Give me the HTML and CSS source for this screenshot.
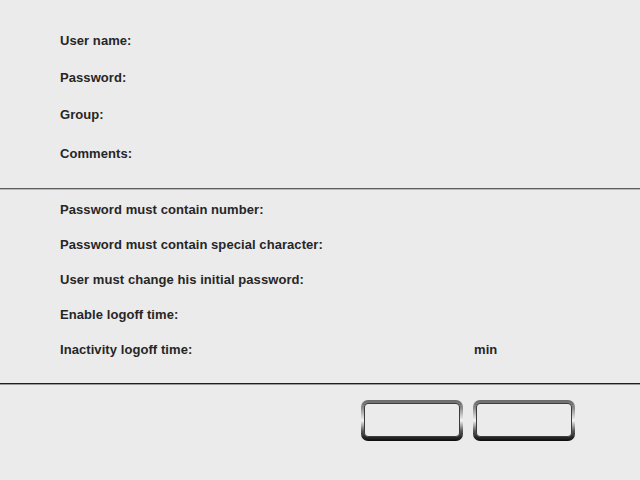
FILE: index.html
```html
<!DOCTYPE html>
<html>
<head>
<meta charset="utf-8">
<link rel="stylesheet" href="styles.css">
</head>
<body>
<div class="page">
  <section class="group group-top">
    <div class="row">User name:</div>
    <div class="row">Password:</div>
    <div class="row">Group:</div>
    <div class="row row-comments">Comments:</div>
  </section>
  <hr class="sep sep-light">
  <section class="group group-mid">
    <div class="row">Password must contain number:</div>
    <div class="row">Password must contain special character:</div>
    <div class="row">User must change his initial password:</div>
    <div class="row">Enable logoff time:</div>
    <div class="row row-split"><span class="lbl">Inactivity logoff time:</span><span class="unit">min</span></div>
  </section>
  <hr class="sep sep-dark">
  <div class="actions">
    <div class="btn"><div class="btn-face"></div></div>
    <div class="btn"><div class="btn-face"></div></div>
  </div>
</div>
</body>
</html>
```

FILE: styles.css
```css
html, body {
  margin: 0;
  padding: 0;
  background: #ebebeb;
}
.page {
  width: 640px;
  height: 480px;
  font-family: "Liberation Sans", Arial, sans-serif;
  font-weight: bold;
  font-size: 13px;
  letter-spacing: 0.07px;
  color: #262626;
  display: flex;
  flex-direction: column;
}
.group {
  display: flex;
  flex-direction: column;
  padding-left: 60px;
}
.group-top {
  padding-top: 22px;
  padding-bottom: 16px;
}
.group-top .row {
  height: 37px;
  line-height: 37px;
}
.group-top .row-comments {
  margin-top: 2px;
}
.group-mid {
  padding-top: 3px;
  padding-bottom: 16px;
}
.group-mid .row {
  height: 35px;
  line-height: 35px;
}
.row-split {
  display: flex;
}
.row-split .lbl {
  width: 414px;
}
.sep {
  margin: 0;
  border: 0;
  height: 1px;
}
.sep-light {
  background: #5e5e5e;
  box-shadow: 0 1px 0 #b9b9b9;
}
.sep-dark {
  background: #1e1e1e;
  box-shadow: 0 1px 0 #9a9a9a;
}
.actions {
  display: flex;
  gap: 10px;
  padding-left: 361px;
  margin-top: 16px;
}
.btn {
  width: 102px;
  height: 41px;
  box-sizing: border-box;
  padding: 3px 3px 4px 3px;
  border-radius: 7px;
  background: linear-gradient(180deg, #6a6a6a 0%, #8c8c8c 20%, #f4f4f4 50%, #5a5a5a 75%, #0c0c0c 100%);
}
.btn-face {
  width: 100%;
  height: 100%;
  box-sizing: border-box;
  background: #ebebeb;
  border: 1px solid #3c3c3c;
  border-radius: 4px;
}
```
